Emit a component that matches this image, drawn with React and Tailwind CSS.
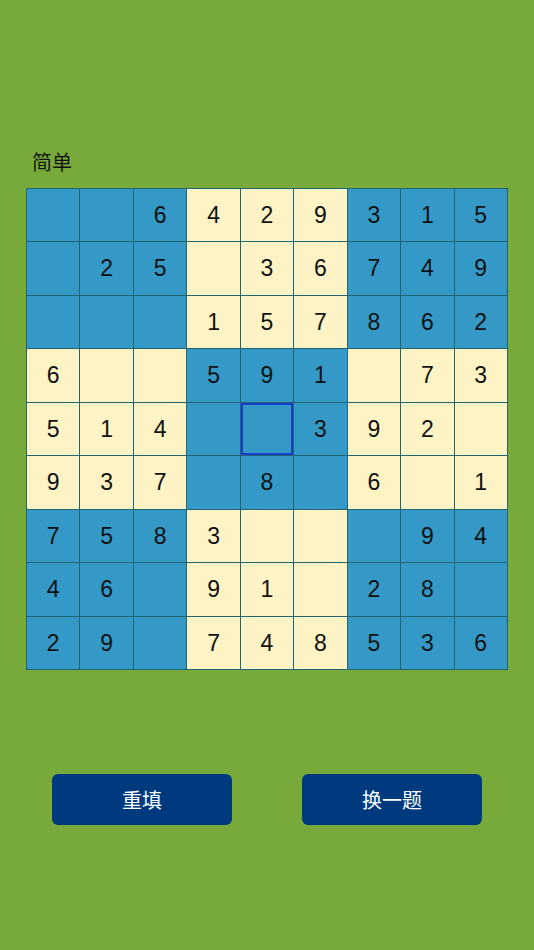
import React from "react";

const data = [
  ["", "", "6", "4", "2", "9", "3", "1", "5"],
  ["", "2", "5", "", "3", "6", "7", "4", "9"],
  ["", "", "", "1", "5", "7", "8", "6", "2"],
  ["6", "", "", "5", "9", "1", "", "7", "3"],
  ["5", "1", "4", "", "", "3", "9", "2", ""],
  ["9", "3", "7", "", "8", "", "6", "", "1"],
  ["7", "5", "8", "3", "", "", "", "9", "4"],
  ["4", "6", "", "9", "1", "", "2", "8", ""],
  ["2", "9", "", "7", "4", "8", "5", "3", "6"],
];

export default function App() {
  return (
    <div
      className="w-[534px] h-[950px] bg-[#77a93b] flex flex-col items-center"
      style={{ fontFamily: '"Liberation Sans", "Noto Sans CJK SC", sans-serif' }}
    >
      <div className="w-[482px] pt-[149px]">
        <div className="pl-[6px] text-[20px] leading-[26px] text-[#111] font-['Noto_Sans_CJK_SC',sans-serif]">
          简单
        </div>
        <div className="mt-[13px] grid grid-cols-9 gap-[1px] p-[1px] bg-[#1f6574] w-[482px] h-[482px]">
          {data.map((row, r) =>
            row.map((v, c) => {
              const blue = (Math.floor(r / 3) + Math.floor(c / 3)) % 2 === 0;
              const sel = r === 4 && c === 4;
              return (
                <div
                  key={r + "-" + c}
                  className={
                    "flex items-center justify-center text-[23px] text-[#111] " +
                    (blue ? "bg-[#3499c6] " : "bg-[#fdf3c5] ") +
                    (sel ? "border-2 border-[#1a3ccc]" : "")
                  }
                >
                  {v}
                </div>
              );
            })
          )}
        </div>
      </div>
      <div className="w-[430px] mt-[104px] flex justify-between">
        <button className="w-[180px] h-[51px] rounded-[6px] bg-[#003a7e] text-white text-[20px] font-['Noto_Sans_CJK_SC',sans-serif]">
          重填
        </button>
        <button className="w-[180px] h-[51px] rounded-[6px] bg-[#003a7e] text-white text-[20px] font-['Noto_Sans_CJK_SC',sans-serif]">
          换一题
        </button>
      </div>
    </div>
  );
}
